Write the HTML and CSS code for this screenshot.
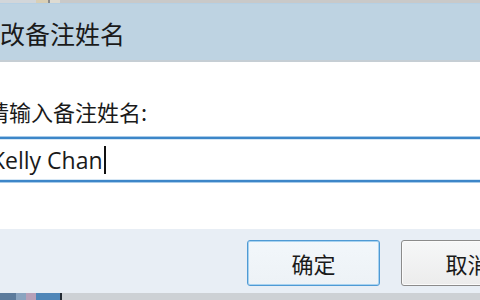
FILE: index.html
```html
<!DOCTYPE html>
<html lang="zh-CN">
<head>
<meta charset="utf-8">
<title>修改备注姓名</title>
<link rel="stylesheet" href="styles.css">
</head>
<body>
<div class="screen">
  <div class="top-strip">
    <span class="ts-a"></span><span class="ts-b"></span><span class="ts-c"></span><span class="ts-d"></span>
  </div>
  <div class="titlebar"><span class="title">修改备注姓名</span></div>
  <div class="content">
    <div class="label">请输入备注姓名:</div>
    <div class="input"><span class="value">Kelly Chan</span><span class="caret"></span></div>
  </div>
  <div class="footer">
    <div class="btn btn-default">确定</div>
    <div class="btn">取消</div>
  </div>
  <div class="bottom-strip">
    <span class="bs-a"></span><span class="bs-b"></span><span class="bs-c"></span><span class="bs-d"></span><span class="bs-e"></span>
  </div>
</div>
</body>
</html>
```

FILE: styles.css
```css
html, body {
  margin: 0;
  padding: 0;
  width: 480px;
  height: 300px;
  overflow: hidden;
  background: #ffffff;
}

.screen {
  width: 480px;
  height: 300px;
  display: flex;
  flex-direction: column;
  overflow: hidden;
  font-family: "Noto Sans CJK SC", "Noto Sans", sans-serif;
  color: #1c1c1c;
}

.top-strip {
  height: 3px;
  flex-shrink: 0;
  background: #c9c9c9;
  display: flex;
}
.ts-a { width: 36px; background: #d2d6da; }
.ts-b { width: 12px; background: #d9cfb6; }
.ts-c { width: 2px; background: #8c8c8c; }
.ts-d { width: 10px; background: #dedbd2; }

.titlebar {
  height: 56px;
  flex-shrink: 0;
  background: #bed3e2;
  border-top: 1px solid #b6d0e4;
  border-bottom: 2px solid #c6ced4;
  display: flex;
  align-items: center;
  overflow: hidden;
}
.title {
  font-size: 25px;
  line-height: 30px;
  margin-left: -25px;
  margin-top: 1px;
  white-space: nowrap;
  color: #1a1a1a;
}

.content {
  height: 167px;
  flex-shrink: 0;
  background: #ffffff;
  padding-top: 36px;
  box-sizing: border-box;
  overflow: hidden;
}
.label {
  font-size: 22px;
  line-height: 26px;
  margin-left: -13px;
  white-space: nowrap;
  color: #1a1a1a;
}
.input {
  margin-top: 13px;
  margin-left: -10px;
  width: 500px;
  height: 41px;
  border-top: 2px solid #3d86c8;
  border-bottom: 2px solid #3d86c8;
  box-shadow: 0 -1px 0 #a8cbe9, 0 1px 0 #a8cbe9, inset 0 1px 0 #d6e7f5, inset 0 -1px 0 #d6e7f5;
  display: flex;
  align-items: center;
  background: #ffffff;
}
.value {
  font-family: "Open Sans", "Noto Sans", sans-serif;
  font-size: 23px;
  line-height: 30px;
  margin-left: 1px;
  white-space: nowrap;
  color: #1a1a1a;
}
.caret {
  width: 2px;
  height: 28px;
  margin-left: 1px;
  background: #111111;
}

.footer {
  height: 64px;
  flex-shrink: 0;
  background: #e8eef5;
  display: flex;
  gap: 21px;
  padding: 11px 0 0 247px;
  box-sizing: border-box;
  overflow: hidden;
}
.btn {
  flex-shrink: 0;
  width: 133px;
  height: 46px;
  box-sizing: border-box;
  border: 1px solid #8b8b8b;
  border-radius: 3px;
  background: linear-gradient(#f6f7f8, #ececec);
  box-shadow: inset 0 0 0 1px #fbfbfb;
  display: flex;
  align-items: center;
  justify-content: center;
  font-size: 22px;
  color: #1a1a1a;
}
.btn-default {
  border-color: #4f9ad4;
  background: linear-gradient(#f2f7fb, #edf2f6);
  box-shadow: inset 0 0 0 1px #a7d2f0;
}

.bottom-strip {
  height: 7px;
  flex-shrink: 0;
  background: #cdd1d5;
  display: flex;
}
.bs-a { width: 16px; background: #5c7b9c; }
.bs-b { width: 10px; background: #8aa4c0; }
.bs-c { width: 10px; background: #b8a0b8; }
.bs-d { width: 24px; background: #4f86b8; }
.bs-e { width: 2px; background: #222a33; }
```
